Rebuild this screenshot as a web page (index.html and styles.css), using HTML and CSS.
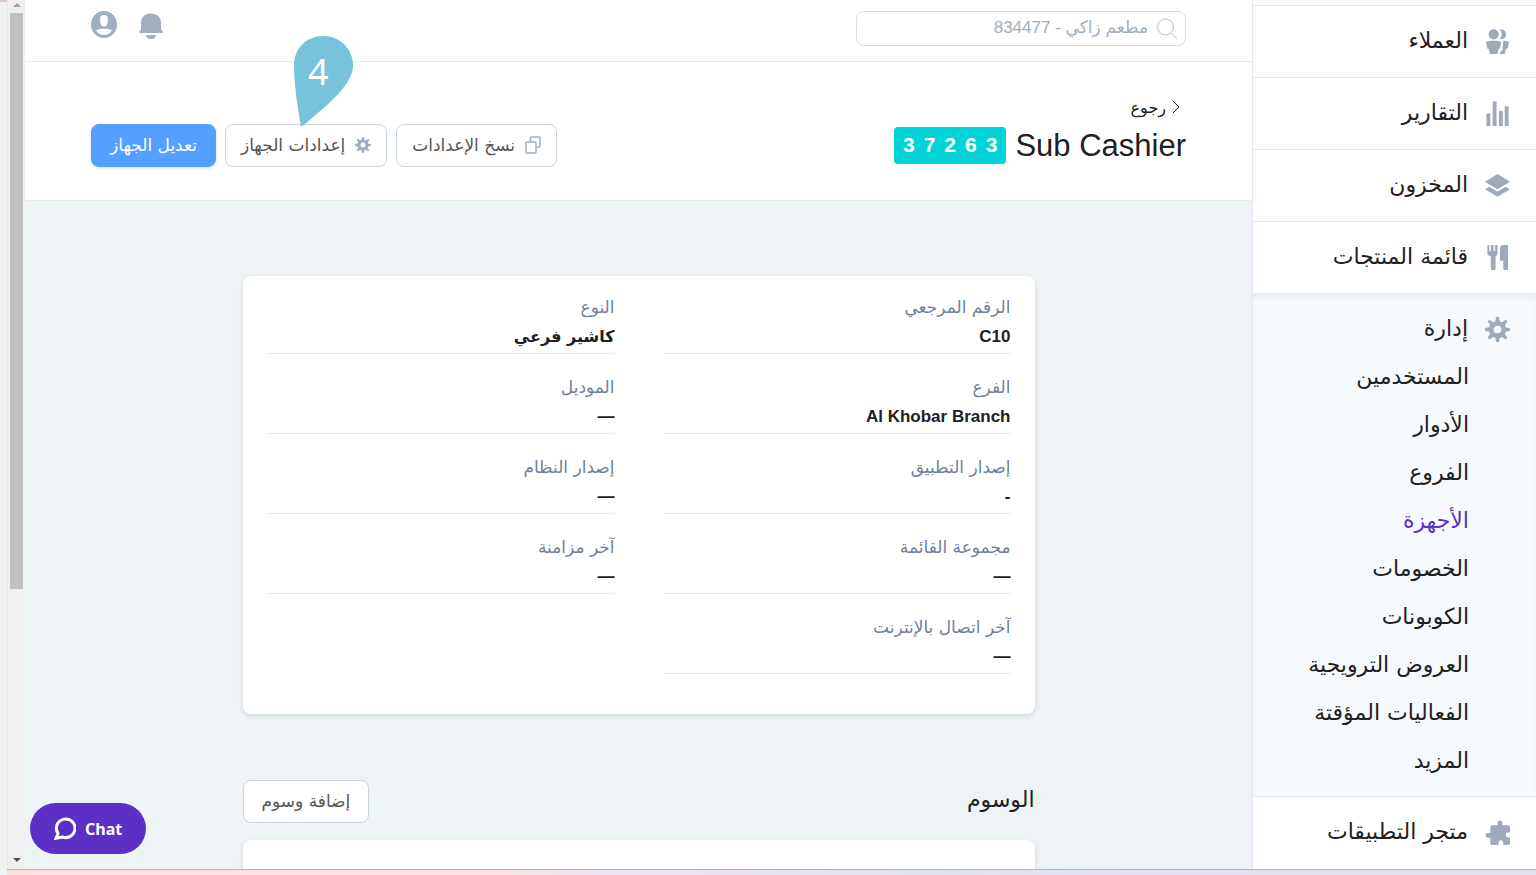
FILE: index.html
```html
<!DOCTYPE html>
<html lang="ar" dir="rtl">
<head>
  <meta charset="UTF-8">
  <meta name="viewport" content="width=device-width, initial-scale=1.0">
  <title>Sub Cashier</title>
  <link rel="stylesheet" href="styles.css">
</head>
<body>
  <div class="window">
    <nav class="sidebar">
      <a class="nav-item" href="#">
        <svg class="nav-icon" viewBox="0 0 26 26"><circle cx="9" cy="5.500" r="5.300"/><path d="M15 .6c4.200-.8 7 1.600 7 4.900s-2.800 5.700-7 4.900c3.200-2.800 3.200-7 0-9.800zM1 13.500C4 11.800 14 11.800 17 13.500L15.500 20.500h-1.500L13 26H5l-1-5.500H2.500zM19 12.200c2.500 0 4.500.4 6 1.300L23.500 20.500h-1.700L20.500 26h-5l1-3.500h1.500z"/></svg>
        <span>العملاء</span>
      </a>
      <a class="nav-item" href="#">
        <svg class="nav-icon" viewBox="0 0 26 26"><path d="M1.500 13h4v13h-4zM8 .5h4V26H8zM14.500 10.500h4V26h-4zM20.500 5.500h4V26h-4z"/></svg>
        <span>التقارير</span>
      </a>
      <a class="nav-item" href="#">
        <svg class="nav-icon" viewBox="0 0 26 26"><path d="M13 1l13 8-13 8L0 9zM0 17l4.500-2.800 8.500 5.200 8.500-5.200L26 17l-13 7.800z"/></svg>
        <span>المخزون</span>
      </a>
      <a class="nav-item" href="#">
        <svg class="nav-icon" viewBox="0 0 26 26"><path d="M2.500 0h2v6.500h1.500V0h3v6.500h1.500V0h2.500v9c0 1.300-.8 2.200-2 2.700v12.300a2.200 2.200 0 0 1-5 0V11.700C4 11.200 2.500 10.300 2.500 9zM15.500 4c0-2.600 1.600-4 3.500-4H24v24a2.500 2.500 0 0 1-5 0v-7.500h-3.500z"/></svg>
        <span>قائمة المنتجات</span>
      </a>
      <div class="nav-group">
        <a class="nav-head" href="#">
          <svg class="nav-icon" viewBox="0 0 26 26"><use href="#gear"/></svg>
          <span>إدارة</span>
        </a>
        <a class="nav-sub" href="#">المستخدمين</a>
        <a class="nav-sub" href="#">الأدوار</a>
        <a class="nav-sub" href="#">الفروع</a>
        <a class="nav-sub active" href="#">الأجهزة</a>
        <a class="nav-sub" href="#">الخصومات</a>
        <a class="nav-sub" href="#">الكوبونات</a>
        <a class="nav-sub" href="#">العروض الترويجية</a>
        <a class="nav-sub" href="#">الفعاليات المؤقتة</a>
        <a class="nav-sub" href="#">المزيد</a>
      </div>
      <a class="nav-item" href="#">
        <svg class="nav-icon" viewBox="0 0 26 26"><path d="M5.500 7.500c0-1 .8-2 2-2H13V3a2.500 2.500 0 0 1 5 0v2.500h6c1 0 2 .8 2 2V13h-2a2.500 2.500 0 0 0 0 5h2v6c0 1-.8 2-2 2h-5v-2.500a2.500 2.500 0 0 0-5 0V26H7.500c-1 0-2-.8-2-2v-5.500H3a2.500 2.500 0 0 1 0-5h2.500z"/></svg>
        <span>متجر التطبيقات</span>
      </a>
    </nav>

    <main class="main">
      <div class="topbar">
        <div class="search">
          <svg class="search-icon" viewBox="0 0 22 22"><circle cx="9.500" cy="9" r="8"/><path d="M15 15l6 6"/></svg>
          <input type="text" aria-label="بحث" placeholder="مطعم زاكي - 834477">
        </div>
        <div class="topbar-icons">
          <button class="icon-btn" aria-label="الإشعارات">
            <svg width="24" height="28" viewBox="0 0 24 28"><path d="M12 2.500c6 0 10 3.800 10 9.500v6.500l1.500 1.700V22H.5v-1.800L2 18.500V12c0-5.700 4-9.500 10-9.500zM7 24h10c-.5 2.500-2.500 4.500-5 4.500S7.500 26.500 7 24z"/></svg>
          </button>
          <button class="icon-btn" aria-label="الحساب">
            <svg width="26" height="28" viewBox="0 0 26 28"><path fill-rule="evenodd" d="M13 0a13 13.500 0 1 1 0 27 13 13.500 0 0 1 0-27zM13 4c-3 0-4 2-4 5 0 3.500 1.500 6.500 4 6.500s4-3 4-6.500c0-3-1-5-4-5zM5 19.500c2 3 5 4.500 8 4.500s6-1.500 8-4.500c-4-2.300-12-2.300-16 0z"/></svg>
          </button>
        </div>
      </div>

      <header class="page-header">
        <div>
          <a class="back" href="#">
            <svg width="8" height="14" viewBox="0 0 8 14"><path d="M1 1l6 6-6 6"/></svg>
            رجوع
          </a>
          <div class="title-row">
            <h1>Sub Cashier</h1>
            <div class="code" dir="ltr"><span>3</span><span>7</span><span>2</span><span>6</span><span>3</span></div>
          </div>
        </div>
        <div class="actions">
          <button class="btn with-icon">
            <svg class="copy-icon" viewBox="0 0 16 18"><path d="M5.500 6V2c0-.6.400-1 1-1H14c.6 0 1 .4 1 1v8c0 .6-.4 1-1 1h-3"/><rect x="1" y="6" width="10" height="11" rx="1"/></svg>
            نسخ الإعدادات
          </button>
          <button class="btn with-icon">
            <svg class="gear-icon" viewBox="0 0 26 26"><use href="#gear"/></svg>
            إعدادات الجهاز
            <span class="pin">
              <svg viewBox="0 0 59 91"><path d="M7 91C3 68 0 47 0 29 0 12 13 0 29.500 0S59 13 59 29.500C59 47 38 66 7 91z"/></svg>
              <b>4</b>
            </span>
          </button>
          <button class="btn primary">تعديل الجهاز</button>
        </div>
      </header>

      <div class="content">
        <dl class="card details">
          <div class="field"><dt>الرقم المرجعي</dt><dd>C10</dd></div>
          <div class="field"><dt>النوع</dt><dd class="ar">كاشير فرعي</dd></div>
          <div class="field"><dt>الفرع</dt><dd>Al Khobar Branch</dd></div>
          <div class="field"><dt>الموديل</dt><dd>—</dd></div>
          <div class="field"><dt>إصدار التطبيق</dt><dd>-</dd></div>
          <div class="field"><dt>إصدار النظام</dt><dd>—</dd></div>
          <div class="field"><dt>مجموعة القائمة</dt><dd>—</dd></div>
          <div class="field"><dt>آخر مزامنة</dt><dd>—</dd></div>
          <div class="field"><dt>آخر اتصال بالإنترنت</dt><dd>—</dd></div>
        </dl>

        <div class="section-head">
          <h2>الوسوم</h2>
          <button class="btn">إضافة وسوم</button>
        </div>
        <div class="card tags"></div>
      </div>

      <button class="chat" dir="ltr">
        <svg viewBox="0 0 22 23"><path d="M4 16.500A9.300 9.300 0 1 1 8.500 20L2 21.300z"/></svg>
        Chat
      </button>
    </main>

    <div class="scrollbar">
      <i class="arrow up"></i>
      <i class="thumb"></i>
      <i class="arrow down"></i>
    </div>
    <div class="edge"></div>
  </div>
  <div class="desktop"></div>

  <svg width="0" height="0" class="defs">
    <defs>
      <path id="gear" fill-rule="evenodd" d="M11.500 0h3l.9 4.500 2.300 1 3.900-2.600 1.800 1.800-2.600 3.900 1 2.300 4.200.7v3l-4.300.8-1 2.300 2.600 3.900-1.900 1.800-3.800-2.600-2.300 1-.8 4.200h-3l-.8-4.300-2.300-1-3.900 2.600-1.800-1.900 2.600-3.800-1-2.300L0 14.500v-3l4.300-.8 1-2.300-2.500-3.800 1.800-1.800 3.900 2.600 2.300-1zM13 9a4 4 0 1 0 0 8 4 4 0 0 0 0-8z"/>
    </defs>
  </svg>
</body>
</html>
```

FILE: styles.css
```css
*{
  box-sizing: border-box;
}
body{
  margin: 0;
  height: 100vh;
  display: flex;
  flex-direction: column;
  overflow: hidden;
  font-family: "DejaVu Sans", sans-serif;
  color: #212121;
  background: #eef3f6;
}
a{
  color: inherit;
  text-decoration: none;
}
button, input{
  font-family: inherit;
  margin: 0;
}
.defs{
  position: absolute;
}
.window{
  flex: 1;
  min-height: 0;
  display: flex;
}

/* sidebar */
.sidebar{
  width: 284px;
  flex-shrink: 0;
  padding-top: 5px;
  background: #fff;
  border-left: 1px solid #e6e9f5;
  overflow: hidden;
  font-size: 22px;
}
.nav-item, .nav-head{
  display: flex;
  align-items: center;
  gap: 17px;
  padding-right: 26px;
}
.nav-item{
  height: 72px;
  border-top: 1px solid #e4e8f5;
}
.nav-item span, .nav-head span{
  padding-bottom: 2px;
}
.nav-icon{
  width: 25px;
  height: 25px;
  fill: #9ea9bc;
}
.nav-group{
  padding: 11px 0 10px;
  background: #f7fafc;
  box-shadow: inset 0 6px 6px -3px #e3e8ed;
}
.nav-head{
  height: 50px;
}
.nav-sub{
  display: block;
  height: 48px;
  line-height: 46px;
  padding-right: 67px;
}
.nav-sub.active{
  color: #5b2fc6;
}

/* main */
.main{
  flex: 1;
  min-width: 0;
  position: relative;
  overflow: hidden;
  background: #eef3f6;
}
.topbar{
  height: 62px;
  padding: 11px 66px;
  display: flex;
  align-items: flex-start;
  justify-content: space-between;
  background: #fff;
  border-bottom: 1px solid #e6e8f3;
}
.search{
  width: 330px;
  height: 35px;
  display: flex;
  align-items: center;
  gap: 8px;
  padding: 0 7px;
  border: 1px solid #d6d9e6;
  border-radius: 8px;
}
.search-icon{
  width: 22px;
  height: 22px;
  fill: none;
  stroke: #b4bdca;
}
.search input{
  flex: 1;
  min-width: 0;
  padding: 0 0 2px;
  border: 0;
  outline: 0;
  font-family: "Liberation Sans", "DejaVu Sans", sans-serif;
  font-size: 17px;
}
.search input::placeholder{
  color: #a0aec0;
}
.topbar-icons{
  display: flex;
  gap: 22px;
}
.icon-btn{
  padding: 0;
  border: 0;
  background: none;
  fill: #a0aec0;
  line-height: 0;
}
.page-header{
  display: flex;
  align-items: flex-end;
  justify-content: space-between;
  height: 139px;
  padding: 0 66px 33px;
  background: #fff;
  border-bottom: 1px solid #e4e8f0;
}
.back{
  display: flex;
  align-items: center;
  gap: 6px;
  height: 24px;
  padding-right: 6px;
  margin-bottom: 8px;
  font-size: 16px;
}
.back svg{
  fill: none;
  stroke: #212121;
}
.title-row{
  display: flex;
  align-items: center;
  gap: 9px;
  margin-bottom: 3px;
}
h1{
  margin: 0;
  font-family: "Liberation Sans", sans-serif;
  font-size: 31px;
  font-weight: normal;
  line-height: 36px;
}
.code{
  display: flex;
  gap: 9px;
  height: 37px;
  padding: 0 9px;
  border-radius: 4px;
  background: #00d4d8;
  color: #fff;
  font-family: "Liberation Sans", sans-serif;
  font-size: 21px;
  font-weight: bold;
  line-height: 35px;
}
.actions{
  display: flex;
  gap: 9px;
}
.btn{
  position: relative;
  display: flex;
  align-items: center;
  height: 43px;
  padding: 0 18px 2px;
  border: 1px solid #cbd5e0;
  border-radius: 8px;
  background: #fff;
  color: #555;
  font-size: 17px;
}
.btn.with-icon{
  gap: 10px;
  padding: 0 15px 2px;
}
.btn.primary{
  border-color: #549fff;
  background: #549fff;
  color: #fff;
  box-shadow: 0 1px 3px rgba(0, 0, 0, .15);
}
.copy-icon{
  width: 16px;
  height: 18px;
  fill: none;
  stroke: #a0aec0;
  stroke-width: 1.500;
}
.gear-icon{
  width: 16px;
  height: 16px;
  fill: #a0aec0;
}
.pin{
  position: absolute;
  left: 68px;
  top: -89px;
  width: 59px;
  height: 91px;
}
.pin svg{
  display: block;
  fill: #78c3dc;
}
.pin b{
  position: absolute;
  left: 14px;
  top: 12px;
  color: #fff;
  font: 36px/48px "Noto Sans", sans-serif;
}

/* content */
.content{
  width: 792px;
  max-width: 100%;
  margin: 0 auto;
  padding-top: 75px;
}
.card{
  margin: 0;
  background: #fff;
  border-radius: 8px;
  box-shadow: 0 2px 5px rgba(0, 0, 0, .12);
}
.details{
  display: grid;
  grid-template-columns: 1fr 1fr;
  gap: 20px 48px;
  padding: 18px 24px 40px;
}
.field{
  height: 60px;
  border-bottom: 1px solid #e6e9f0;
}
.field dt{
  color: #718096;
  font-size: 17px;
  line-height: 26px;
}
.field dd{
  margin: 0;
  font-family: "Liberation Sans", sans-serif;
  font-size: 17px;
  font-weight: bold;
  line-height: 33px;
}
.field dd.ar{
  font-family: "DejaVu Sans", sans-serif;
  font-size: 16px;
}
.section-head{
  display: flex;
  align-items: center;
  justify-content: space-between;
  margin: 66px 0 17px;
}
h2{
  margin: 0;
  padding-bottom: 4px;
  font-size: 22px;
  font-weight: normal;
}
.tags{
  height: 120px;
}
.chat{
  position: absolute;
  left: 5px;
  bottom: 15px;
  display: flex;
  align-items: center;
  gap: 9px;
  height: 51px;
  padding: 0 24px;
  border: 0;
  border-radius: 26px;
  background: #5a30c5;
  color: #fff;
  font-family: "Noto Sans", sans-serif;
  font-size: 16px;
  font-weight: bold;
}
.chat svg{
  width: 22px;
  height: 23px;
  fill: none;
  stroke: #fff;
  stroke-width: 3;
}

/* window frame */
.scrollbar{
  width: 18px;
  display: flex;
  flex-direction: column;
  align-items: center;
  padding: 3px 0 7px;
  background: #f1f0f0;
  border-left: 1px solid #e6e6f5;
}
.arrow{
  border: 4px solid transparent;
}
.arrow.up{
  border-top: 0;
  border-bottom-color: #a3a3a3;
}
.arrow.down{
  margin-top: auto;
  border-bottom: 0;
  border-top-color: #505050;
}
.thumb{
  width: 13px;
  height: 67%;
  margin-top: 6px;
  background: #c1c1c1;
}
.edge{
  width: 7px;
  background: #f0f0f0;
  border-top: 2px solid #e5c9c0;
}
.desktop{
  height: 6px;
  margin-left: 7px;
  border-top: 1px solid #b5b1b6;
  background: linear-gradient(to right, #f9e3df, #f8e4e2 33%, #efe2f3 39%, #e2e4f2 60%, #e6e1f2 75%, #e6e1f2);
}
```
